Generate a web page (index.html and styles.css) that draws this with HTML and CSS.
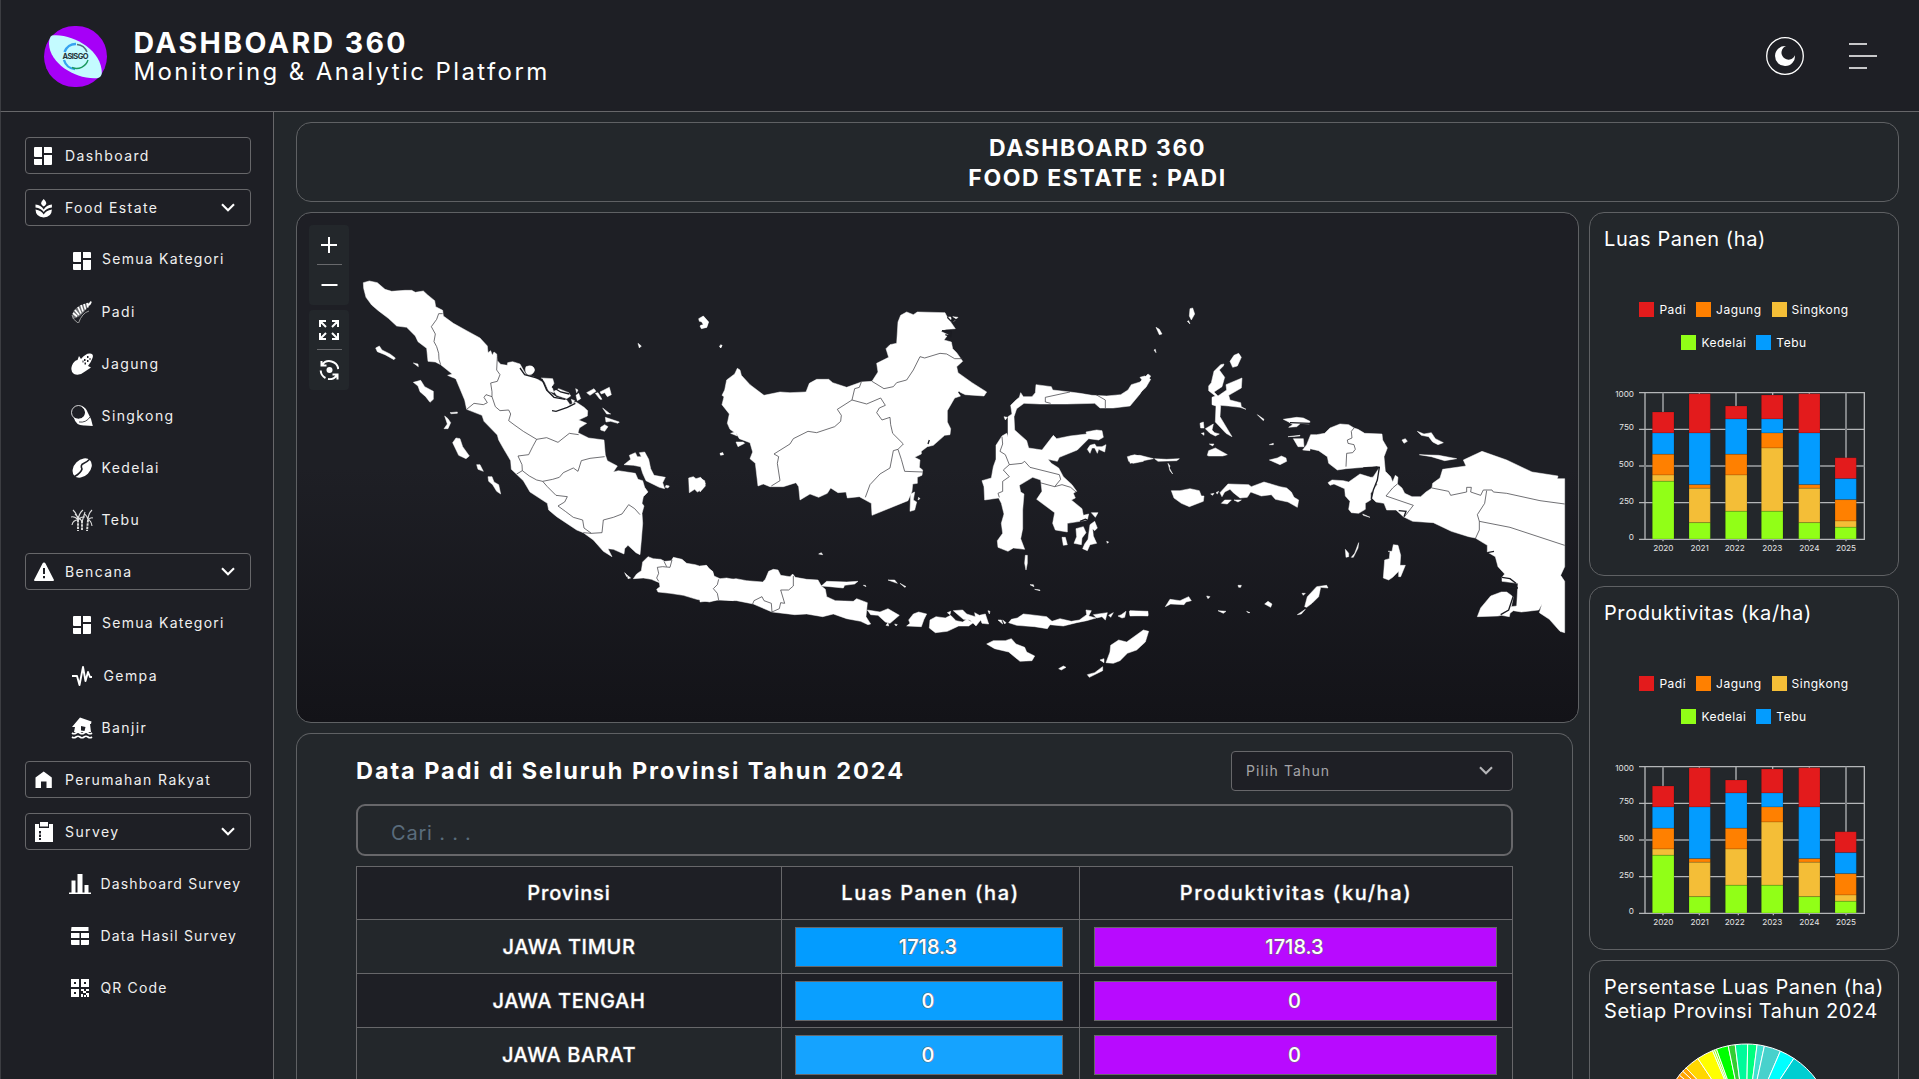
FILE: index.html
```html
<!DOCTYPE html>
<html lang="id">
<head>
<meta charset="utf-8">
<title>Dashboard 360</title>
<link rel="stylesheet" href="styles.css">
</head>
<body>
<svg class="defs" aria-hidden="true">
  <symbol id="i-grid" viewBox="0 0 18 18"><path d="M1 0h7v10H1a1 1 0 0 1-1-1V1a1 1 0 0 1 1-1zM10 0h7a1 1 0 0 1 1 1v5h-8zM0 12h8v6H1a1 1 0 0 1-1-1zM10 8h8v9a1 1 0 0 1-1 1h-7z"/></symbol>
  <symbol id="i-chevron" viewBox="0 0 14 9"><path d="M1 1.2l6 6 6-6" fill="none" stroke="currentColor" stroke-width="2.1"/></symbol>
  <g id="bars">
    <g fill="none" stroke="#b4b6b8" stroke-width="4">
      <path d="M177 578H853V1018H177M195 578V1018M177 688H853M177 908H853"/>
      <path d="M177 798H853M249 578V640M798 578V780" stroke="#808386" stroke-width="6"/>
      <path d="M358 578v6M468 578v42M578 578v10M688 578v6M249 1018v6M358 1018v6M475 1018v6M580 1018v6M688 1018v6M798 1018v6"/>
    </g>
    <g stroke="#000" stroke-opacity=".18" stroke-width="2.5">
      <g fill="#e31b1c"><path d="M217 636h65v63h-65zM327 581h64v118h-64zM436 618h65v39h-65zM544 585h65v72h-65zM656 581h64v118h-64zM765 773h64v63h-64z"/></g>
      <g fill="#039cff"><path d="M217 699h65v64h-65zM327 699h64v155h-64zM436 657h65v106h-65zM544 657h65v42h-65zM656 699h64v155h-64zM765 836h64v63h-64z"/></g>
      <g fill="#ff8000"><path d="M217 763h65v62h-65zM327 854h64v11h-64zM436 763h65v62h-65zM544 699h65v45h-65zM656 854h64v11h-64zM765 899h64v64h-64z"/></g>
      <g fill="#f4be37"><path d="M217 825h65v19h-65zM327 865h64v103h-64zM436 825h65v109h-65zM544 744h65v190h-65zM656 865h64v103h-64zM765 963h64v19h-64z"/></g>
      <g fill="#91ff17"><path d="M217 844h65v173h-65zM327 968h64v49h-64zM436 934h65v83h-65zM544 934h65v83h-65zM656 968h64v49h-64zM765 982h64v35h-64z"/></g>
    </g>
  </g>
</svg>

<header class="header">
  <svg class="logo" width="63" height="61" viewBox="0 0 63 61">
    <rect width="63" height="61" rx="30.5" fill="#a600f7"/>
    <path d="M8 9.5C28 7 58 24 57.800 47Q57.500 51 54 52C32 54 6 38 5 18Q5 11 8 9.500z" fill="#c4fbff"/>
    <g fill="none" stroke-width="2">
      <path d="M20.500 26A12 12.500 0 0 1 32 18" stroke="#36a3f0" stroke-width="2.400"/>
      <path d="M20 34A12 12.500 0 0 0 31 43" stroke="#36a3f0" stroke-width="2.400"/>
      <path d="M33 18.500A12 12 0 0 1 43 26" stroke="#55717f" stroke-width="1.500"/>
      <path d="M44 34A12 12 0 0 1 28 41.500" stroke="#1c9a60" stroke-width="1.400"/>
    </g>
    <text x="31.500" y="33" text-anchor="middle" textLength="26" class="logo-text">ASISGO</text>
  </svg>
  <div class="brand">
    <strong>DASHBOARD 360</strong>
    <span>Monitoring &amp; Analytic Platform</span>
  </div>
  <div class="actions">
    <svg width="38" height="38" viewBox="0 0 38 38"><circle cx="19" cy="19" r="18.300" fill="none" stroke="#fff" stroke-width="1.300"/><path d="M20 9.100A10 10 0 1 0 29 18.200A7 7 0 1 1 20 9.100z" fill="#fff"/></svg>
    <svg width="28" height="26" viewBox="0 0 28 26"><path d="M0 1h18M0 13h28M0 25h18" stroke="#fff" stroke-width="1.600"/></svg>
  </div>
</header>

<div class="shell">
<nav class="sidebar">
  <a class="item box"><svg class="ic" viewBox="0 0 20 20"><use href="#i-grid" width="18" height="18" y="1"/></svg><span>Dashboard</span></a>
  <a class="item box"><svg class="ic" viewBox="0 0 20 20"><path d="M9.700 1q3 3 2.500 5-1 1.500-2.500 2.500-1.500-1-2.500-2.500-.5-2 2.500-5zM1.500 6.500q5.500.5 8.200 5 2.700-4.500 8.200-5v3q-5.500.5-8.200 4.500-2.700-4-8.200-4.500zM1.500 11.500q6 1 8.200 5 2.200-4 8.200-5-.2 7.500-8.200 8-8-.5-8.200-8z"/></svg><span>Food Estate</span><svg class="chev"><use href="#i-chevron"/></svg></a>
  <a class="item sub all"><svg class="ic" viewBox="0 0 22 22"><use href="#i-grid" width="18" height="18" x="2" y="3"/></svg><span>Semua Kategori</span></a>
  <a class="item sub"><svg class="ic" viewBox="0 0 22 22"><path d="M20 1l-5 1.500L8 5 3 9 1 15l1 3 3-1 4-2 4-4 3-4z" opacity=".35"/><path d="M20 .5q-1 4-4 3.500M16 2l1 4.500M13 3l1.500 5.500M10 4l2 6.500M7 6l3 6.500M4 9l4 5M2 12l4 3.500" fill="none" stroke="#fff" stroke-width="1.700"/><path d="M18 10q-7 2-10.500 12M1 14q0 4 6 8" fill="none" stroke="#aaa" stroke-width=".9"/></svg><span>Padi</span></a>
  <a class="item sub"><svg class="ic" viewBox="0 0 22 22"><path d="M8 3l2 3q5-6 9-5.500Q23 1 21.500 5 20 9.500 17 13l3 1.500-6 4Q8 23.500 3 21-1 18 1 12.500 3 7.500 6.500 7z"/><path d="M13 7h1.500M16 4h1.500M16 8h1.500M13.500 10.500h1.500M18.500 6h1M11.500 8.500h1" stroke="#1e1f25" stroke-width="1.800"/></svg><span>Jagung</span></a>
  <a class="item sub"><svg class="ic" viewBox="0 0 22 22"><circle cx="7.500" cy="7.500" r="7" fill="none" stroke="#fff" stroke-width=".8"/><path d="M10 1q5 1 7 7l3 6 1.800 7-8-.5q-9 .5-11-8 6 3 10-1 4-5-2.800-10.500z"/><path d="M8 17q7 1 11-5" fill="none" stroke="#1e1f25" stroke-width=".8"/></svg><span>Singkong</span></a>
  <a class="item sub"><svg class="ic" viewBox="0 0 22 22"><ellipse cx="11.200" cy="11" rx="8" ry="11" transform="rotate(45 11.200 11)"/><path d="M19.500 1.500Q16 5 12.500 6.500T11 12q-1 4-7.500 7.500" fill="none" stroke="#1e1f25" stroke-width="1.600"/></svg><span>Kedelai</span></a>
  <a class="item sub"><svg class="ic" viewBox="0 0 22 22"><g fill="none" stroke="#ddd" stroke-width="1.100"><path d="M7 11Q4 7 0 8M7 11Q6 5 2 1M7 11Q8 4 12 1M7 11q4-4 7-3M7 11q-5 0-6 5M17 11q-1-5-4-6M17 11q0-6 4-10M17 11q3-3 5-2M17 11q3 0 4 6M14 3l-3 10M4 5l7 7"/><path d="M7 11v11M11 12v10M17 11l-1 11" stroke-width="1.900" stroke-dasharray="2.500 .8"/></g></svg><span>Tebu</span></a>
  <a class="item box"><svg class="ic" viewBox="0 0 20 20"><path d="M10 .5q1 0 1.500 1L20 18q0 1-1 1H1q-1 0-1-1L8.500 1.500Q9 .5 10 .5z"/><path d="M10 6v6M10 14v2.200" stroke="#1e1f25" stroke-width="2"/></svg><span>Bencana</span><svg class="chev"><use href="#i-chevron"/></svg></a>
  <a class="item sub all"><svg class="ic" viewBox="0 0 22 22"><use href="#i-grid" width="18" height="18" x="2" y="3"/></svg><span>Semua Kategori</span></a>
  <a class="item sub gempa"><svg class="ic" viewBox="0 0 22 22"><path d="M1 11h5l2.500 9L12 2l2.500 14L17 7l2 5h2" fill="none" stroke="#fff" stroke-width="1.900" stroke-linejoin="round"/></svg><span>Gempa</span></a>
  <a class="item sub"><svg class="ic" viewBox="0 0 22 22"><path d="M9 .5l11.500 4-.5 2.500h-1l1 8h-3q-3 1.500-6 0-2 1.500-5 0H3l1-5H1z"/><path d="M10 9l4.500 1-1 4-3.500-.5z" fill="#1e1f25"/><path d="M1 16q2 1.500 4 0t4 0 4 0 4 0 4 0M1 20q2 1.500 4 0t4 0 4 0 4 0 4 0" fill="none" stroke="#fff" stroke-width="1.700"/></svg><span>Banjir</span></a>
  <a class="item box"><svg class="ic" viewBox="0 0 20 20"><path d="M9.700 1.500l8.100 6V18h-5.300v-6.500H7V18H1.500V7.500z"/></svg><span>Perumahan Rakyat</span></a>
  <a class="item box"><svg class="ic" viewBox="0 0 20 20"><path d="M1 2h4v4h10V2h4v18H1z"/><path d="M6 0h8v4.500H6z"/><path d="M6 9v2.500M6 12.500V15M6 16v2" stroke="#1e1f25" stroke-width="2"/></svg><span>Survey</span><svg class="chev"><use href="#i-chevron"/></svg></a>
  <a class="item sub srv"><svg class="ic" viewBox="0 0 22 22"><path d="M0 19.500h2.500V7.500h4v12h2V1h5v18.500h2V12h4v7.500H22V21H0z"/></svg><span>Dashboard Survey</span></a>
  <a class="item sub srv"><svg class="ic" viewBox="0 0 22 22"><path d="M2.500 2h17v4H2zM2 8h8.500v5H2zM12 8h8v5h-8zM2 15h8.500v5H3q-1 0-1-1zM12 15h8v4q0 1-1 1h-7z"/></svg><span>Data Hasil Survey</span></a>
  <a class="item sub srv"><svg class="ic" viewBox="0 0 22 22"><path fill-rule="evenodd" d="M2 2h8v8H2zm3 3v2h2V5zM12 2h8v8h-8zm3 3v2h2V5zM2 12h8v8H2zm3 3v2h2v-2zM12 12h3v2h2v2h-3v-2h-2zM17 12h3v2h-3zM12 17h2v3h-2zM15 18h2v2h-2zM17 16h3v4h-2v-2h-1z"/></svg><span>QR Code</span></a>
</nav>

<main class="main">
  <h1 class="card title">DASHBOARD 360<br>FOOD ESTATE : PADI</h1>
  <div class="left">
    <section class="card map">
      <svg class="geo" width="1281" height="509" viewBox="297 213 1281 509">
        <g transform="translate(290 210) scale(.333333)">
          <path class="land" d="M220 218L238 213 262 218 285 238 305 244 345 241 365 241 376 247 400 243 412 254 434 272 437 290 458 301 460 318 490 340 530 362 570 384 592 408 594 428 602 422 607 436 612 426 620 432 622 452 632 463 652 466 653 458 668 455 690 462 700 480 708 494 730 500 760 518 770 540 800 562 830 570 840 584 858 576 882 592 893 602 892 618 866 630 890 640 868 654 864 668 896 684 942 690 946 735 952 752 982 768 970 786 985 782 1036 790 1044 808 1058 812 1064 832 1074 846 1060 860 1056 880 1062 888 1056 910 1058 940 1054 990 1050 1034 1038 1028 1014 1006 1004 1016 1002 1032 970 1018 954 1016 966 1040 940 1024 910 990 880 968 860 960 800 920 776 900 772 880 720 846 700 812 664 778 662 752 640 715 626 690 622 675 582 634 576 616 530 598 524 570 498 508 484 490 452 464 436 456 414 454 410 415 384 395 376 378 350 352 320 348 295 325 265 302 245 285 228 262 221 235z"/>
          <path class="land" d="M257 414L268 408 276 420 300 432 316 444 312 449 285 434 262 425zM370 517L392 511 404 530 430 544 430 568 420 577 407 560 390 545 384 528zM370 459L384 462 385 470zM473 496L488 492 502 500 498 506 482 500zM480 608L502 606 502 610 484 611zM464 618L474 626 482 638 474 656 462 656 472 642zM488 698L498 684 510 686 518 710 538 738 528 746 506 736zM560 764L570 764 580 784 564 778zM594 800L606 800 612 816 626 824 632 852 620 844 608 824 596 814z"/>
          <path class="land" d="M708 470Q730 462 734 480 730 496 714 494 702 486 708 470zM753 504L788 506 792 520 786 530 792 548 776 544 764 516zM792 544L806 536 836 548 842 558 830 566 800 556zM857 536L864 540 860 548zM866 550L872 566 862 572 858 556zM844 568L854 572 848 582zM890 548L912 536 918 544 900 556zM916 550L924 548 936 568 930 568zM930 546L958 532 964 554 952 560 944 548 934 552zM938 594L958 610 962 612 950 612zM946 622L988 636 984 640 962 634 948 636zM932 652L944 644 954 650 944 664 932 660zM1002 764L1022 748 1018 736 1036 728 1042 740 1054 740 1048 728 1064 726 1076 748 1082 776 1092 796 1126 802 1118 818 1124 836 1108 832 1068 812 1058 790 1052 770 1030 766zM1128 826l10 2-4 6-8-2zM1196 804L1210 800 1218 806 1232 802 1246 820 1236 838 1222 846 1214 838 1198 848zM1226 326L1240 318 1256 336 1250 352 1236 354 1232 346 1242 344 1238 336 1228 334zM1044 400l10 8-6 6zM1292 404l4 2-4 8zM1290 732l8-4 2 6zM1004 1088l8 8-2 4zM1012 1096l10 8-8 2z"/>
          <path class="land" d="M1030 1106L1040 1092 1054 1082 1058 1056 1074 1040 1090 1046 1112 1048 1124 1054 1144 1052 1150 1042 1176 1048 1190 1060 1216 1064 1240 1072 1250 1066 1256 1076 1268 1084 1272 1098 1290 1106 1310 1104 1330 1108 1330 1172 1290 1168 1258 1176 1220 1168 1180 1156 1140 1150 1104 1146 1100 1138 1110 1130 1108 1118 1084 1108 1060 1104z"/>
          <path class="sea" d="M786 602L798 604 832 592 856 580 M690 474L704 494 756 508 770 540 792 562 826 568M786 530L812 546 838 552"/>
          <path class="prov" d="M458 311L446 311 440 328 424 350 436 372 432 395 440 410 446 430 447 448 452 464M622 440L620 480 630 494 622 514 602 519 606 545 606 560 588 554 582 562 592 578 580 584 552 580 530 598M606 560L616 590 630 602 656 600 662 612 656 632 672 644 700 664 740 688 770 683 804 697 838 670 866 674M740 688L728 710 716 734 684 738 696 764 697 782 680 792M697 782L718 798 740 810 758 814 788 808 808 802 820 788 850 774 864 784 874 752 900 745 944 740M758 814L772 830 798 856 832 860 824 876 804 888 826 904 850 922 878 930 882 954 904 970 936 968 940 930 970 922 996 912 1016 884 1034 896 1050 914M880 968l24 2M1106 1114L1100 1104 1106 1090 1102 1072 1118 1070 1140 1072 1146 1050M1122 1054L1130 1070"/>
        </g>
        <g transform="translate(700 290) scale(.333333)">
          <path class="land" d="M112 235L120 240 124 256 150 284 192 316 240 306 270 308 318 306 328 280 350 268 386 268 398 278 440 292 484 276 516 274 534 246 530 220 566 202 558 176 570 164 590 160 594 96 602 76 620 66 640 74 652 66 735 68 742 82 754 80 752 96 766 116 740 118 722 124 744 134 732 150 754 156 758 176 770 188 788 214 770 230 774 248 816 278 860 306 852 318 796 314 774 304 782 318 764 324 742 362 742 396 752 416 750 434 734 436 700 466 682 470 664 484 664 492 644 502 660 510 658 532 668 540 666 556 652 562 652 580 638 582 636 604 624 632 516 676 514 640 478 620 442 624 438 606 414 608 392 594 382 610 356 622 330 612 300 630 296 590 288 578 250 590 210 590 190 582 174 588 166 520 150 506 158 486 150 458 118 446 110 432 90 418 82 400 88 372 66 344 72 320 66 316 74 300 80 270 104 252z"/>
          <path class="land" d="M108 456l22 0 4 4-20 10zM92 430l14-4 6 12zM60 490l8-2 2 6-8 2zM0 565L14 572 16 588 0 606zM0 86L10 80 24 96 20 112 4 116 0 108 10 104zM58 168l8-2-4 8zM758 80l16 2-12 12 6-8zM632 612L644 606 640 630 650 636 644 660 630 664zM654 630l2-8 4 4zM356 792l8-4 4 6z"/>
          <path class="land" d="M1008 284L1054 290 1058 300 1110 306 1140 310 1176 316 1220 318 1262 314 1284 300 1294 284 1320 276 1344 252 1352 258 1320 312 1290 348 1240 354 1200 354 1184 340 1100 342 1020 342 972 340 950 356 942 380 944 420 980 452 986 474 1026 480 1060 436 1070 446 1110 438 1160 432 1158 426 1190 420 1206 422 1210 442 1196 450 1166 446 1132 480 1078 502 1072 514 1044 508 1054 520 1076 534 1090 560 1116 584 1130 604 1120 610 1126 624 1114 630 1146 656 1150 676 1166 672 1162 690 1140 694 1102 700 1102 726 1066 720 1058 700 1064 668 1010 628 1026 604 1022 570 998 562 958 586 962 606 972 612 968 660 968 716 962 746 974 778 940 774 924 784 894 772 892 752 908 730 904 700 912 672 904 640 896 624 854 630 852 590 846 572 874 564 880 530 888 508 888 466 906 438 920 430 924 440 924 380 936 372 932 346 948 330 958 322 962 308 970 320 996 320 1006 308z"/>
          <path class="land" d="M1162 478L1170 466 1184 462 1190 470 1206 470 1218 464 1214 486 1196 478 1192 490 1184 474 1176 474 1170 490zM1282 500L1304 494 1330 502 1330 514 1300 520 1286 514zM1174 668l20 0-8 14zM1128 716L1150 710 1158 728 1146 744 1144 764 1122 760 1130 740zM1170 704L1184 694 1192 714 1184 722 1178 716 1180 738 1190 760 1170 764 1162 782 1148 776 1154 762 1164 748zM1086 742l10 0 6 22-12 2zM1220 754l6 2-4 4zM976 796l6 0 0 24-4 20-4-20zM912 380l10 2-6 8zM564 870l20 0 8 10zM600 880l18 10-4 2zM990 884l10 0 2 6zM1004 898l16 2 0 2z"/>
          <path class="land" d="M0 828L18 826 38 846 42 862 56 868 80 870 108 866 140 872 188 876 196 868 206 844 220 838 234 840 242 856 270 860 278 852 286 862 320 868 354 870 364 888 376 898 380 920 406 932 460 934 470 926 502 938 498 980 512 1002 504 1004 482 994 440 986 400 972 368 980 320 972 284 974 216 966 160 942 110 932 50 930 0 936z"/>
          <path class="land" d="M364 888L380 874 440 876 474 874 464 882 434 886 430 894 390 890zM490 886l6 0 2 4zM502 960L540 966 564 956 598 976 570 1000 556 996 534 976 512 974zM630 1000L626 990 640 972 656 966 680 972 672 988 664 1010 620 1008zM558 1006l6-8 2 10zM584 1002l8 2-4 4zM688 1014L690 990 708 980 736 984 752 976 768 992 788 996 800 988 820 998 806 1008 776 1008 742 1024 706 1028zM760 962L788 960 800 972 826 980 824 968 838 976 856 972 866 1002 846 1000 842 990 828 1008 810 990 790 988zM742 968l10-4-2 10zM864 962l6 2-2 8zM894 990l10 0 4 12zM908 990l10 8-4 4zM926 998L934 988 952 984 970 972 990 974 1040 980 1056 994 1080 986 1114 994 1138 990 1160 974 1158 960 1174 962 1166 978 1188 984 1160 992 1130 998 1090 1008 1050 1004 1042 1016 1004 1010 950 1006zM1180 974L1222 968 1216 990 1206 980 1190 984zM1226 976l14-8-8 14zM1254 978l10-4 14-10-4 18-8 2zM1288 964l16 0 0 10 40-4 0 8-54-2zM860 1062L880 1052 916 1052 934 1046 948 1062 974 1072 980 1086 1004 1098 996 1112 960 1114 926 1086 884 1076zM1218 1118L1230 1086 1232 1066 1256 1050 1280 1056 1330 1020 1346 1024 1336 1056 1310 1080 1282 1090 1260 1112 1240 1120zM1200 1110l12-4 0 12zM1162 1154L1184 1148 1208 1130 1208 1142 1168 1162zM1076 1136l14-8 8 4-14 8z"/>
          <path class="sea" d="M742 82L752 92 772 88M726 122L754 124 752 140 736 134M752 78l10 10M688 450L684 462M776 306l8 10M1140 694l16-6 16 6"/>
          <path class="prov" d="M516 274L552 296 580 290 590 278 620 270 640 240 660 200 674 204 720 190 740 192 764 206 788 206M484 276L478 292 464 296 456 330 412 358 424 376 422 394 404 410 350 428 324 424 280 446 270 462 222 492 236 500 232 520 240 572 214 588M456 330L500 342 542 324 556 346 538 354 530 368 546 390 570 382 572 404 578 430 610 462 594 478 604 508 614 544 668 546M594 478L580 482 570 534 540 552 510 584 496 622M56 868L52 884 40 896 52 910 56 930M158 942L162 932 186 920 192 932 214 940 216 966M216 966L238 956 242 938 254 940 242 900 266 900 280 888 280 858M1110 306L1036 322 1036 336 1052 340M1188 314L1216 330 1216 354M906 440L908 462 900 484 916 494 928 524 910 540 928 560 908 574 908 604 894 610 898 622M928 524L966 520 974 514 990 532 1078 554 1082 568 1064 590 1020 578M1064 590L1086 584 1112 592 1128 606"/>
        </g>
        <g transform="translate(1130 290) scale(.333333)">
          <path class="land" d="M0 310L24 290 36 270 30 262 44 258 62 268 48 292 20 318 0 342zM180 56L188 54 194 72 184 90 178 78zM172 94l4-2 4 10zM78 112l10 6 8 14-8 2zM72 180l4-2 2 10zM300 214L312 196 326 190 334 202 322 228 308 232zM282 222L280 228 268 240 284 262 276 290 252 306 264 318 290 300 288 284 336 264 334 294 296 316 300 330 332 338 334 350 348 358 330 352 296 348 272 346 270 380 306 440 288 430 256 396 258 348 246 344 246 322 256 318 236 302 236 288 244 278 252 244 272 224zM382 374l6 4 14 10-2 4zM210 400l10-4 2 18-10 0zM226 416L250 402 246 420 254 428 268 432 256 438 240 430zM214 430l8-2 0 8zM238 462l14 0-4 6zM232 496L236 482 256 474 292 494 278 498 236 498zM418 464l12-4 0 4zM418 510L442 504 454 498 468 504 470 514 450 524zM0 498L30 496 70 506 0 520zM74 506L110 508 148 506 140 512 84 514zM114 520L120 528 118 534 128 552 120 542zM124 602L150 602 180 596 208 602 214 618 222 618 220 634 178 650 154 640 132 624zM242 612l10-2-4 6zM258 608l8-4-4 8zM270 608L294 582 356 584 364 590 402 576 450 590 470 594 484 606 492 622 506 630 502 652 474 636 436 628 424 614 394 618 362 606 352 622 330 624 310 608 300 598 284 606 276 620zM274 640l10-10 20 0-12 12zM312 630l22 0-10 6z"/>
          <path class="land" d="M460 388L500 382 520 384 540 394 538 402 512 400 500 410 476 412 488 404 476 396zM474 440l36-4 0 2zM490 446L520 446 522 470 504 470zM518 480L530 464 542 434 560 434 584 430 600 414 630 402 656 404 672 414 684 418 704 430 756 432 758 450 772 474 762 500 766 544 782 560 788 576 796 556 804 562 802 582 816 594 824 610 846 620 872 620 888 606 906 594 908 580 930 564 938 538 1008 528 1000 510 1056 484 1130 510 1206 546 1284 558 1282 566 1304 566 1304 830 1292 856 1304 874 1304 1028 1290 1024 1258 988 1228 968 1236 942 1226 960 1174 966 1150 962 1140 970 1138 980 1114 976 1104 978 1042 980 1052 954 1082 918 1114 906 1130 906 1150 920 1144 950 1160 948 1164 880 1116 874 1116 862 1124 852 1104 830 1096 800 1072 786 1072 766 1036 744 1016 740 964 724 910 698 848 694 820 680 798 660 770 660 762 640 738 636 726 624 728 600 742 584 730 560 750 530 740 528 700 532 648 536 622 540 596 520 592 500 566 482 540 476 540 482zM594 578L606 570 640 572 656 576 690 552 722 562 742 560 738 586 722 610 722 630 706 640 706 658 686 670 664 668 656 658 660 634 646 618 644 596 612 582 600 586zM698 672l22 10-20-6zM816 450l10-4 6 8-10 6zM862 424L882 432 904 428 916 446 940 458 924 464 908 456 896 440 874 436zM868 494L926 496 980 506 944 512 904 500zM646 778L656 790 656 800 648 802zM664 802L674 790 686 758 684 774 670 802zM790 764L804 766 812 796 810 826 826 826 812 860 806 860 806 844 788 862 776 870 760 864 764 810 778 806 780 784 774 784 786 784zM106 950L120 928 150 932 176 920 184 932 168 936 162 944 122 942zM230 918l10 2-6 6zM324 886l10 0-2 6-6 0zM264 962l24 2-8 6zM350 964l10 4-6 0zM404 942L414 934 426 942 422 952zM516 910l10 0-6 6zM524 950L532 920 560 890 590 886 594 894 572 892 566 920 546 940 530 952zM502 974l24-16-12 14zM0 962L54 964 54 976 0 978z"/>
          <path class="sea" d="M700 534L748 532 742 570 730 600 724 626M806 662L828 664 822 680M1116 862L1140 866 1158 880M1120 890L1164 894M1134 900L1150 918 1136 960 1112 974M1072 788L1092 784M480 398L540 400"/>
          <path class="prov" d="M672 414L664 424 666 444 652 450 654 460 672 464 676 478 668 488 650 490 648 530M802 582L788 594 768 618 850 646 822 682M906 594L956 604 962 616 1010 606 1010 592 1024 592 1022 606 1052 616 1060 600 1086 600 1090 606 1130 610 1230 632 1304 642M1070 602L1064 640 1042 674 1048 694 1048 720 1036 746M1048 694L1140 712 1304 766"/>
        </g>
      </svg>
      <div class="controls">
        <div class="ctl">
          <svg viewBox="0 0 20 20"><path d="M2 10h16M10 2v16"/></svg>
          <svg viewBox="0 0 20 20"><path d="M2 10h16"/></svg>
        </div>
        <div class="ctl">
          <svg viewBox="0 0 20 20"><path d="M1 7V1h6M1 1l6 6M13 1h6v6M19 1l-6 6M1 13v6h6M1 19l6-6M13 19h6v-6M19 19l-6-6"/></svg>
          <svg viewBox="0 0 20 20"><path d="M2 1v4.500h5M2.500 5A9 9 0 0 1 18.800 9M1.200 10.500A9 9 0 0 0 6 18M18 19.500v-5h-5M17.500 15A9 9 0 0 1 8.500 19"/><circle cx="10" cy="10" r="3" fill="#fff" stroke="none"/></svg>
        </div>
      </div>
    </section>

    <section class="card data">
      <div class="data-head">
        <h2>Data Padi di Seluruh Provinsi Tahun 2024</h2>
        <div class="select">Pilih Tahun<svg class="chev"><use href="#i-chevron"/></svg></div>
      </div>
      <div class="search">Cari . . .</div>
      <table>
        <colgroup><col class="c1"><col class="c2"><col class="c3"></colgroup>
        <tr><th class="short">Provinsi</th><th>Luas Panen (ha)</th><th>Produktivitas (ku/ha)</th></tr>
        <tr><td>JAWA TIMUR</td><td class="a"><div class="blue">1718.3</div></td><td class="b"><div class="purple">1718.3</div></td></tr>
        <tr><td>JAWA TENGAH</td><td class="a"><div class="blue mid">0</div></td><td class="b"><div class="purple">0</div></td></tr>
        <tr><td>JAWA BARAT</td><td class="a"><div class="blue soft">0</div></td><td class="b"><div class="purple">0</div></td></tr>
      </table>
    </section>
  </div>

  <aside class="right">
    <section class="card stat">
      <h3>Luas Panen (ha)</h3>
      <ul class="legend"><li class="red">Padi</li><li class="orange">Jagung</li><li class="yellow">Singkong</li></ul>
      <ul class="legend"><li class="green">Kedelai</li><li class="azure">Tebu</li></ul>
      <svg class="plot" viewBox="30 540 924 540">
        <use href="#bars"/>
        <g class="axis" text-anchor="end"><text x="162" y="592">1000</text><text x="162" y="691">750</text><text x="162" y="801">500</text><text x="162" y="911">250</text><text x="162" y="1021">0</text></g>
        <g class="axis" text-anchor="middle"><text x="250" y="1054">2020</text><text x="359" y="1054">2021</text><text x="464" y="1054">2022</text><text x="577" y="1054">2023</text><text x="688" y="1054">2024</text><text x="798" y="1054">2025</text></g>
      </svg>
    </section>
    <section class="card stat">
      <h3>Produktivitas (ka/ha)</h3>
      <ul class="legend"><li class="red">Padi</li><li class="orange">Jagung</li><li class="yellow">Singkong</li></ul>
      <ul class="legend"><li class="green">Kedelai</li><li class="azure">Tebu</li></ul>
      <svg class="plot" viewBox="30 540 924 540">
        <use href="#bars"/>
        <g class="axis" text-anchor="end"><text x="162" y="592">1000</text><text x="162" y="691">750</text><text x="162" y="801">500</text><text x="162" y="911">250</text><text x="162" y="1021">0</text></g>
        <g class="axis" text-anchor="middle"><text x="250" y="1054">2020</text><text x="359" y="1054">2021</text><text x="464" y="1054">2022</text><text x="577" y="1054">2023</text><text x="688" y="1054">2024</text><text x="798" y="1054">2025</text></g>
      </svg>
    </section>
    <section class="card stat last">
      <h3>Persentase Luas Panen (ha)<br>Setiap Provinsi Tahun 2024</h3>
      <svg class="pie" width="180" height="180" viewBox="-90 -90 180 180">
        <circle r="86.500" fill="#00a0e0"/>
        <g stroke="#fff">
          <path fill="#ff8c00" d="M0 0L-87 0A87 87 0 0 1-66.600-55.900z"/>
          <path fill="#ffa500" d="M0 0L-66.600-55.900A87 87 0 0 1-63.200-59.800z"/>
          <path fill="#ffa500" d="M0 0L-63.200-59.800A87 87 0 0 1-59.900-63.100z"/>
          <path fill="#ffd700" d="M0 0L-59.900-63.100A87 87 0 0 1-48.100-72.500z"/>
          <path fill="#ff0" d="M0 0L-48.100-72.500A87 87 0 0 1-33.400-80.300z"/>
          <path fill="#adff2f" d="M0 0L-33.400-80.300A87 87 0 0 1-31.500-81.100z"/>
          <path fill="#7fff00" d="M0 0L-31.500-81.100A87 87 0 0 1-29.500-81.900z"/>
          <path fill="#0f0" d="M0 0L-29.500-81.900A87 87 0 0 1-17.800-85.200z"/>
          <path fill="#32cd32" d="M0 0L-17.800-85.200A87 87 0 0 1-10.800-86.300z"/>
          <path fill="#00fa9a" d="M0 0L-10.800-86.300A87 87 0 0 1 1.700-87z"/>
          <path fill="#00ff7f" d="M0 0L1.700-87A87 87 0 0 1 11.100-86.300z"/>
          <path fill="#40e0d0" d="M0 0L11.100-86.300A87 87 0 0 1 18.400-85z"/>
          <path fill="#48d1cc" d="M0 0L18.400-85A87 87 0 0 1 34.400-79.900z"/>
          <path fill="#0ff" d="M0 0L34.400-79.900A87 87 0 0 1 47.900-72.600z"/>
          <path fill="#00ced1" d="M0 0L47.900-72.600A87 87 0 0 1 71.300-49.900z"/>
        </g>
      </svg>
    </section>
  </aside>
</main>
</div>
</body>
</html>
```
FILE: styles.css
```css
* { box-sizing: border-box; }
body {
  margin: 0;
  height: 1079px;
  overflow: hidden;
  display: flex;
  flex-direction: column;
  background: #23272b;
  color: #fff;
  font-family: "Inter", "Open Sans", sans-serif;
}
h1, h2, h3, ul { margin: 0; padding: 0; }
svg { display: block; flex: none; }
.defs { position: absolute; width: 0; height: 0; }

.header {
  height: 112px;
  flex: none;
  display: flex;
  align-items: center;
  padding: 0 42px 0 43px;
  background: #1e1f25;
  border-bottom: 1px solid #67676a;
  border-left: 1px solid #3c3d42;
}
.logo { margin-top: 2px; }
.logo-text { font: 700 7.5px "Inter", sans-serif; fill: #23333a; }
.brand { margin-left: 26.5px; display: flex; flex-direction: column; }
.brand strong { font-size: 28.5px; line-height: 30px; letter-spacing: 2.4px; margin-top: 2px; }
.brand span { font-size: 24px; line-height: 28px; letter-spacing: 2.4px; }
.actions { margin-left: auto; display: flex; align-items: center; gap: 45px; }

.shell { flex: 1; min-height: 0; display: flex; }
.sidebar {
  width: 274px;
  flex: none;
  padding: 25px 22px 0 24px;
  display: flex;
  flex-direction: column;
  gap: 15px;
  background: #1e1f25;
  border-left: 1px solid #3c3d42;
  border-right: 1px solid #67676a;
}
.item {
  height: 37px;
  flex: none;
  display: flex;
  align-items: center;
  font-size: 14px;
  letter-spacing: 1.4px;
  color: #f0f0f0;
  white-space: nowrap;
}
.item span { padding-bottom: 1px; }
.ic { fill: #fff; }
.box { border: 1px solid #67676a; border-radius: 4px; padding: 0 15px 0 8px; }
.box .ic { width: 20px; height: 20px; margin-right: 11px; }
.chev { width: 14px; height: 9px; margin-left: auto; color: #fff; }
.sub { padding-left: 46px; }
.sub .ic { width: 22px; height: 22px; margin-right: 8.5px; }
.all { letter-spacing: 1.25px; }
.all .ic { margin-right: 9px; }
.item.all span { padding-bottom: 3px; }
.gempa .ic { margin-right: 10.5px; }
.srv { padding-left: 44px; letter-spacing: 1.15px; }
.srv .ic { margin-right: 9.5px; }

.main {
  flex: 1;
  min-height: 0;
  padding: 10px 20px 0 22px;
  display: grid;
  grid-template-columns: 1283px 310px;
  grid-template-rows: 80px 1fr;
  gap: 10px;
}
.card { border: 1px solid #5f6164; border-radius: 15px; background: #23272b; }
.title {
  grid-column: 1 / 3;
  display: flex;
  align-items: center;
  justify-content: center;
  padding-top: 2px;
  text-align: center;
  font-size: 23px;
  line-height: 30px;
  letter-spacing: 1.6px;
}
.left, .right { display: flex; flex-direction: column; gap: 10px; min-height: 0; }

.map { height: 511px; flex: none; position: relative; overflow: hidden; background: linear-gradient(#1e1f25 50%, #131318); }
.land { fill: #fff; stroke: #fff; stroke-width: 1.5; }
.sea { fill: none; stroke: #1b1c22; stroke-width: 4; }
.prov { fill: none; stroke: #3c3d42; stroke-width: 2.2; stroke-linejoin: round; }
/* Zoom controls float over the map */
.controls { position: absolute; left: 12px; top: 12px; display: flex; flex-direction: column; gap: 5px; }
.ctl { width: 40px; height: 80px; border-radius: 4px; background: #23272b; display: flex; flex-direction: column; align-items: center; }
.ctl svg { width: 20px; height: 20px; margin: 10px 0 9px; fill: none; stroke: #fff; stroke-width: 2; }
.ctl svg + svg { box-sizing: content-box; margin: 0; padding: 10px 2.5px; border-top: 1px solid #68696c; }

.data { width: 1277px; flex: 1; min-height: 0; overflow: hidden; padding: 17px 59px 0; border-bottom: 0; border-radius: 15px 15px 0 0; }
.data-head { display: flex; justify-content: space-between; align-items: center; height: 40px; }
h2 { font-size: 23.5px; letter-spacing: 1.93px; white-space: nowrap; padding-bottom: 2px; }
.select {
  width: 282px;
  height: 40px;
  padding: 0 19px 1px 14px;
  display: flex;
  align-items: center;
  border: 1px solid #67676a;
  border-radius: 4px;
  background: #1e1f25;
  color: #a5a5a8;
  font-size: 14px;
  letter-spacing: 1.1px;
}
.select .chev { color: #b5b5b8; }
.search {
  height: 52px;
  margin: 13px 0 10px;
  padding: 6px 0 0 33px;
  display: flex;
  align-items: center;
  border: 2px solid #67676a;
  border-radius: 9px;
  color: #5a6c7c;
  font-size: 20px;
  letter-spacing: .8px;
}
table { width: 1157px; table-layout: fixed; border-collapse: collapse; font-size: 20px; text-align: center; }
.c1 { width: 425px; }
.c2 { width: 298px; }
th, td { height: 54px; padding: 0; border: 1px solid #67676a; font-weight: 500; letter-spacing: .6px; color: #fff; -webkit-text-stroke: 1px #6d6e72; paint-order: stroke fill; }
th { letter-spacing: 1.6px; height: 53px; }
.short { letter-spacing: .9px; }
tr:nth-child(odd) { background: #1e1f25; }
tr:nth-child(even) { background: #23272b; }
.a { padding: 0 16px 0 13px; }
.b { padding: 0 15px 0 14px; }
.a div, .b div { height: 40px; line-height: 38px; border: 1px solid #67676a; letter-spacing: 0; padding-right: 2px; }
.blue { background: #039cff; }
.blue.mid { background: #0a9fff; }
.blue.soft { background: #15a3ff; }
.purple { background: #b80aff; }

.stat { height: 364px; flex: none; padding-top: 14px; overflow: hidden; }
.last { flex: 1; height: auto; min-height: 0; border-bottom: 0; border-radius: 15px 15px 0 0; }
h3 { padding-left: 14px; font-size: 20px; line-height: 24px; font-weight: 400; letter-spacing: .58px; white-space: nowrap; }
.legend { display: flex; justify-content: center; gap: 10px; list-style: none; height: 15px; margin-bottom: 18px; font-size: 12px; line-height: 15px; letter-spacing: .5px; }
h3 + .legend { margin-top: 51px; }
.legend li { display: flex; gap: 5px; }
.legend li::before { content: ""; width: 15px; height: 15px; background: var(--c); }
.red { --c: #e31b1c; }
.orange { --c: #ff8000; }
.yellow { --c: #f4be37; }
.green { --c: #91ff17; }
.azure { --c: #039cff; }
.plot { width: 308px; height: 180px; margin-top: 30px; }
.axis { font: 24.5px "Inter", sans-serif; fill: #e4e4e4; }
.pie { margin: 18px 0 0 65.5px; }
```
